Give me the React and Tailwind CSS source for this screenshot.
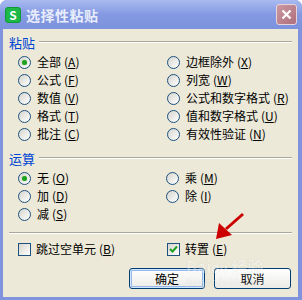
import React from "react";

const FONT = { fontFamily: '"Noto Sans CJK SC", "DejaVu Sans", sans-serif' };

function Radio({ checked }) {
  return (
    <span className="w-[13px] h-[13px] rounded-full border border-[#1C5180] bg-linear-to-br from-[#D6D5CE] to-white flex items-center justify-center shrink-0">
      {checked && <span className="w-[5px] h-[5px] rounded-full bg-[#21A121] shadow-[0_0_1px_#5fd35f]" />}
    </span>
  );
}

function Check({ checked }) {
  return (
    <span className="w-[13px] h-[13px] border border-[#1C5180] bg-linear-to-br from-[#D6D5CE] to-white flex items-center justify-center shrink-0">
      {checked && (
        <svg width="9" height="9" viewBox="0 0 9 9">
          <polyline points="1,4 3.5,6.5 8,1.5" fill="none" stroke="#21A121" strokeWidth="2" />
        </svg>
      )}
    </span>
  );
}

function Label({ text, k }) {
  return (
    <span className="text-[12px] leading-none text-black whitespace-nowrap">
      {text}
      <span className="ml-[3px]">(</span>
      <span className="underline">{k}</span>
      <span>)</span>
    </span>
  );
}

function RadioItem({ text, k, checked }) {
  return (
    <div className="h-[18px] flex items-center gap-[6px]">
      <Radio checked={checked} />
      <Label text={text} k={k} />
    </div>
  );
}

function Heading({ text }) {
  return (
    <div className="h-[14px] flex items-center pl-[6px] pr-[6px]">
      <span className="text-[13px] leading-none text-[#0046D5]">{text}</span>
      <div className="flex-1 ml-[4px] flex flex-col">
        <div className="h-px bg-[#ACA899]" />
        <div className="h-px bg-white" />
      </div>
    </div>
  );
}

export default function App() {
  return (
    <div className="w-[302px] h-[300px] bg-[#7F93DE] rounded-t-[7px] flex flex-col overflow-hidden relative" style={FONT}>
      {/* title bar */}
      <div className="h-[29px] shrink-0 flex items-center pl-[5px] pr-[5px] bg-linear-to-b from-[#A9BAF0] via-[#8499E2] to-[#7D92DD]">
        <div className="w-[16px] h-[16px] rounded-[3px] bg-[#1DB847] border border-[#0E9A35] flex items-center justify-center">
          <span className="text-white text-[12px] font-bold leading-none">S</span>
        </div>
        <span className="ml-[5px] text-[14px] font-bold text-[#E8EDFB] leading-none tracking-[0.5px]">选择性粘贴</span>
        <div className="flex-1" />
        <div className="w-[21px] h-[21px] rounded-[3px] border border-[#E7D4DA] bg-linear-to-br from-[#CB98A2] to-[#AE707D] flex items-center justify-center">
          <svg width="11" height="11" viewBox="0 0 11 11">
            <path d="M1.5 1.5 L9.5 9.5 M9.5 1.5 L1.5 9.5" stroke="white" strokeWidth="2.2" />
          </svg>
        </div>
      </div>

      {/* body */}
      <div className="flex-1 ml-[3px] mr-[4px] mb-[3px] bg-[#ECE9D8] flex flex-col pt-[6px]">
        <Heading text="粘贴" />
        <div className="grid grid-cols-[149px_1fr] pl-[15px] mt-[4px]">
          <div className="flex flex-col">
            <RadioItem text="全部" k="A" checked />
            <RadioItem text="公式" k="F" />
            <RadioItem text="数值" k="V" />
            <RadioItem text="格式" k="T" />
            <RadioItem text="批注" k="C" />
          </div>
          <div className="flex flex-col">
            <RadioItem text="边框除外" k="X" />
            <RadioItem text="列宽" k="W" />
            <RadioItem text="公式和数字格式" k="R" />
            <RadioItem text="值和数字格式" k="U" />
            <RadioItem text="有效性验证" k="N" />
          </div>
        </div>

        <div className="mt-[8px]">
          <Heading text="运算" />
        </div>
        <div className="grid grid-cols-[148px_1fr] pl-[15px] mt-[4px]">
          <div className="flex flex-col">
            <RadioItem text="无" k="O" checked />
            <RadioItem text="加" k="D" />
            <RadioItem text="减" k="S" />
          </div>
          <div className="flex flex-col">
            <RadioItem text="乘" k="M" />
            <RadioItem text="除" k="I" />
          </div>
        </div>

        <div className="mt-[9px] mx-[6px] flex flex-col">
          <div className="h-px bg-[#ACA899]" />
          <div className="h-px bg-white" />
        </div>

        <div className="grid grid-cols-[149px_1fr] pl-[15px] mt-[6px]">
          <div className="h-[18px] flex items-center gap-[5px]">
            <Check />
            <Label text="跳过空单元" k="B" />
          </div>
          <div className="h-[18px] flex items-center gap-[5px]">
            <Check checked />
            <Label text="转置" k="E" />
          </div>
        </div>

        <div className="flex justify-end gap-[9px] pr-[7px] mt-[10px]">
          <div className="w-[76px] h-[21px] rounded-[3px] border border-[#003C74] bg-linear-to-b from-white to-[#ECEBE6] flex items-center justify-center shadow-[inset_0_0_0_1px_#CEE7FF,inset_0_0_0_2px_#98B8EA]">
            <span className="text-[12px] leading-none text-black">确定</span>
          </div>
          <div className="w-[77px] h-[21px] rounded-[3px] border border-[#003C74] bg-linear-to-b from-white to-[#ECEBE6] flex items-center justify-center">
            <span className="text-[12px] leading-none text-black">取消</span>
          </div>
        </div>
      </div>

      {/* watermark */}
      <div className="absolute left-[186px] top-[258px] flex flex-col items-start opacity-30 pointer-events-none">
        <span className="text-[16px] font-bold text-white leading-none" style={{ textShadow: "0 0 1px #999" }}>Bai<span className="text-[13px]">du</span> 经验</span>
        <span className="text-[9px] text-white leading-none mt-[3px]" style={{ textShadow: "0 0 1px #999" }}>jingyan.baidu.com</span>
      </div>

      {/* arrow */}
      <svg className="absolute left-0 top-0 pointer-events-none" width="302" height="300">
        <line x1="243" y1="214" x2="226" y2="229" stroke="#CC0000" strokeWidth="3" />
        <polygon points="216,239 219,223 232,235" fill="#CC0000" />
      </svg>
    </div>
  );
}
